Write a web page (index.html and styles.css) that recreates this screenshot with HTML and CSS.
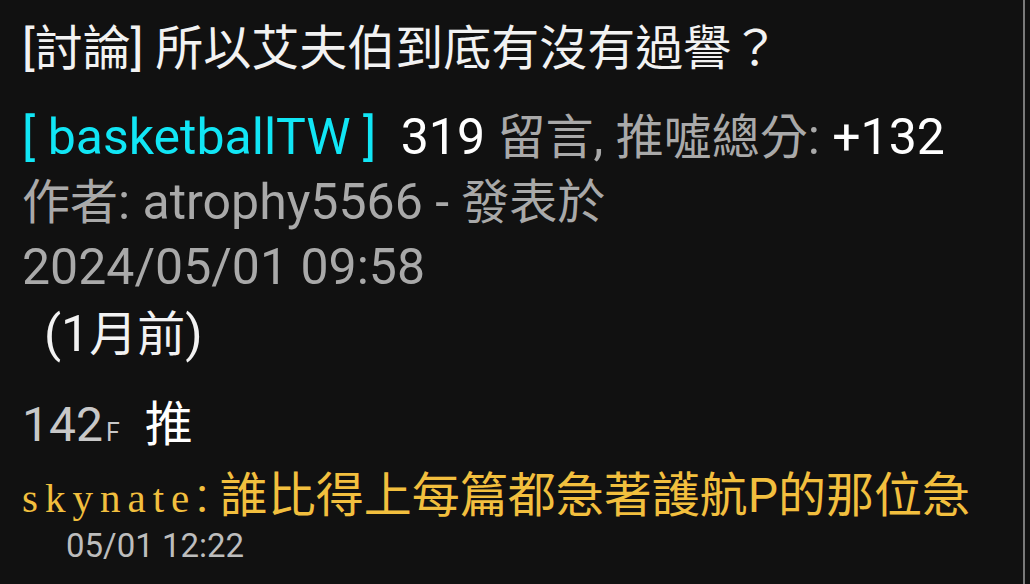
FILE: index.html
```html
<!DOCTYPE html>
<html lang="zh-Hant">
<head>
    <meta charset="UTF-8">
    <meta name="viewport" content="width=device-width, initial-scale=1.0">
    <title>[討論] 所以艾夫伯到底有沒有過譽？</title>
    <link rel="stylesheet" href="styles.css">
</head>
<body>
    <div class="screen">
        <div class="content">
            <h1 class="title">[討論] 所以艾夫伯到底有沒有過譽？</h1>

            <div class="meta">
                <div class="meta-line">
                    <span class="board">[ basketballTW ]</span>
                    <span class="num">319</span> <span class="zh">留言</span>, <span class="zh">推噓總分</span>: <span class="num">+132</span>
                </div>
                <div class="meta-line"><span class="zh">作者</span>: atrophy5566 - <span class="zh">發表於</span></div>
                <div class="meta-line">2024/05/01 09:58</div>
                <div class="meta-line ago">(1<span class="zh">月前</span>)</div>
            </div>

            <div class="comment">
                <div class="comment-head">
                    <span class="floor">142<span class="floor-f">F</span></span>
                    <span class="push">推</span>
                </div>
                <div class="comment-body"><span class="user">skynate</span>: 誰比得上每篇都急著護航P的那位急</div>
                <div class="comment-time">05/01 12:22</div>
            </div>
        </div>
        <div class="scrollbar"></div>
    </div>
</body>
</html>
```

FILE: styles.css
```css
* {
    margin: 0;
    padding: 0;
    box-sizing: border-box;
}

body {
    background: #111111;
    font-family: Roboto, "Noto Sans CJK TC", sans-serif;
    color: #a9a9a9;
    overflow: hidden;
}

.screen {
    display: flex;
    height: 584px;
}

.content {
    flex: 1;
    padding: 16px 0 0 22px;
    white-space: nowrap;
}

.title {
    font-size: 48px;
    font-weight: normal;
    line-height: 65px;
    color: #f2f2f2;
    margin-bottom: 24px;
}

.meta-line {
    font-size: 50px;
    line-height: 65px;
}

.meta-line .zh {
    font-size: 48px;
}

.board {
    color: #11e6f5;
}

.num {
    color: #ffffff;
}

.board + .num {
    margin-left: 12px;
}

.ago {
    color: #f2f2f2;
    padding-left: 22px;
    margin-top: 2px;
}

.comment {
    margin-top: 25px;
}

.comment-head {
    font-size: 48px;
    line-height: 65px;
    display: flex;
    align-items: baseline;
    gap: 25px;
}

.floor {
    color: #c8c8c8;
}

.floor-f {
    font-size: 25px;
    margin-left: 3px;
}

.push {
    color: #ffffff;
}

.comment-body {
    font-size: 48px;
    line-height: 62px;
    color: #f2bf3e;
}

.user {
    font-family: "Liberation Serif", serif;
    font-size: 41px;
    letter-spacing: 7px;
}

.comment-time {
    font-size: 33px;
    line-height: 34px;
    color: #bdbdbd;
    padding-left: 44px;
}

.scrollbar {
    width: 2px;
    margin-right: 5px;
    background: #7a7a7a;
}
```
